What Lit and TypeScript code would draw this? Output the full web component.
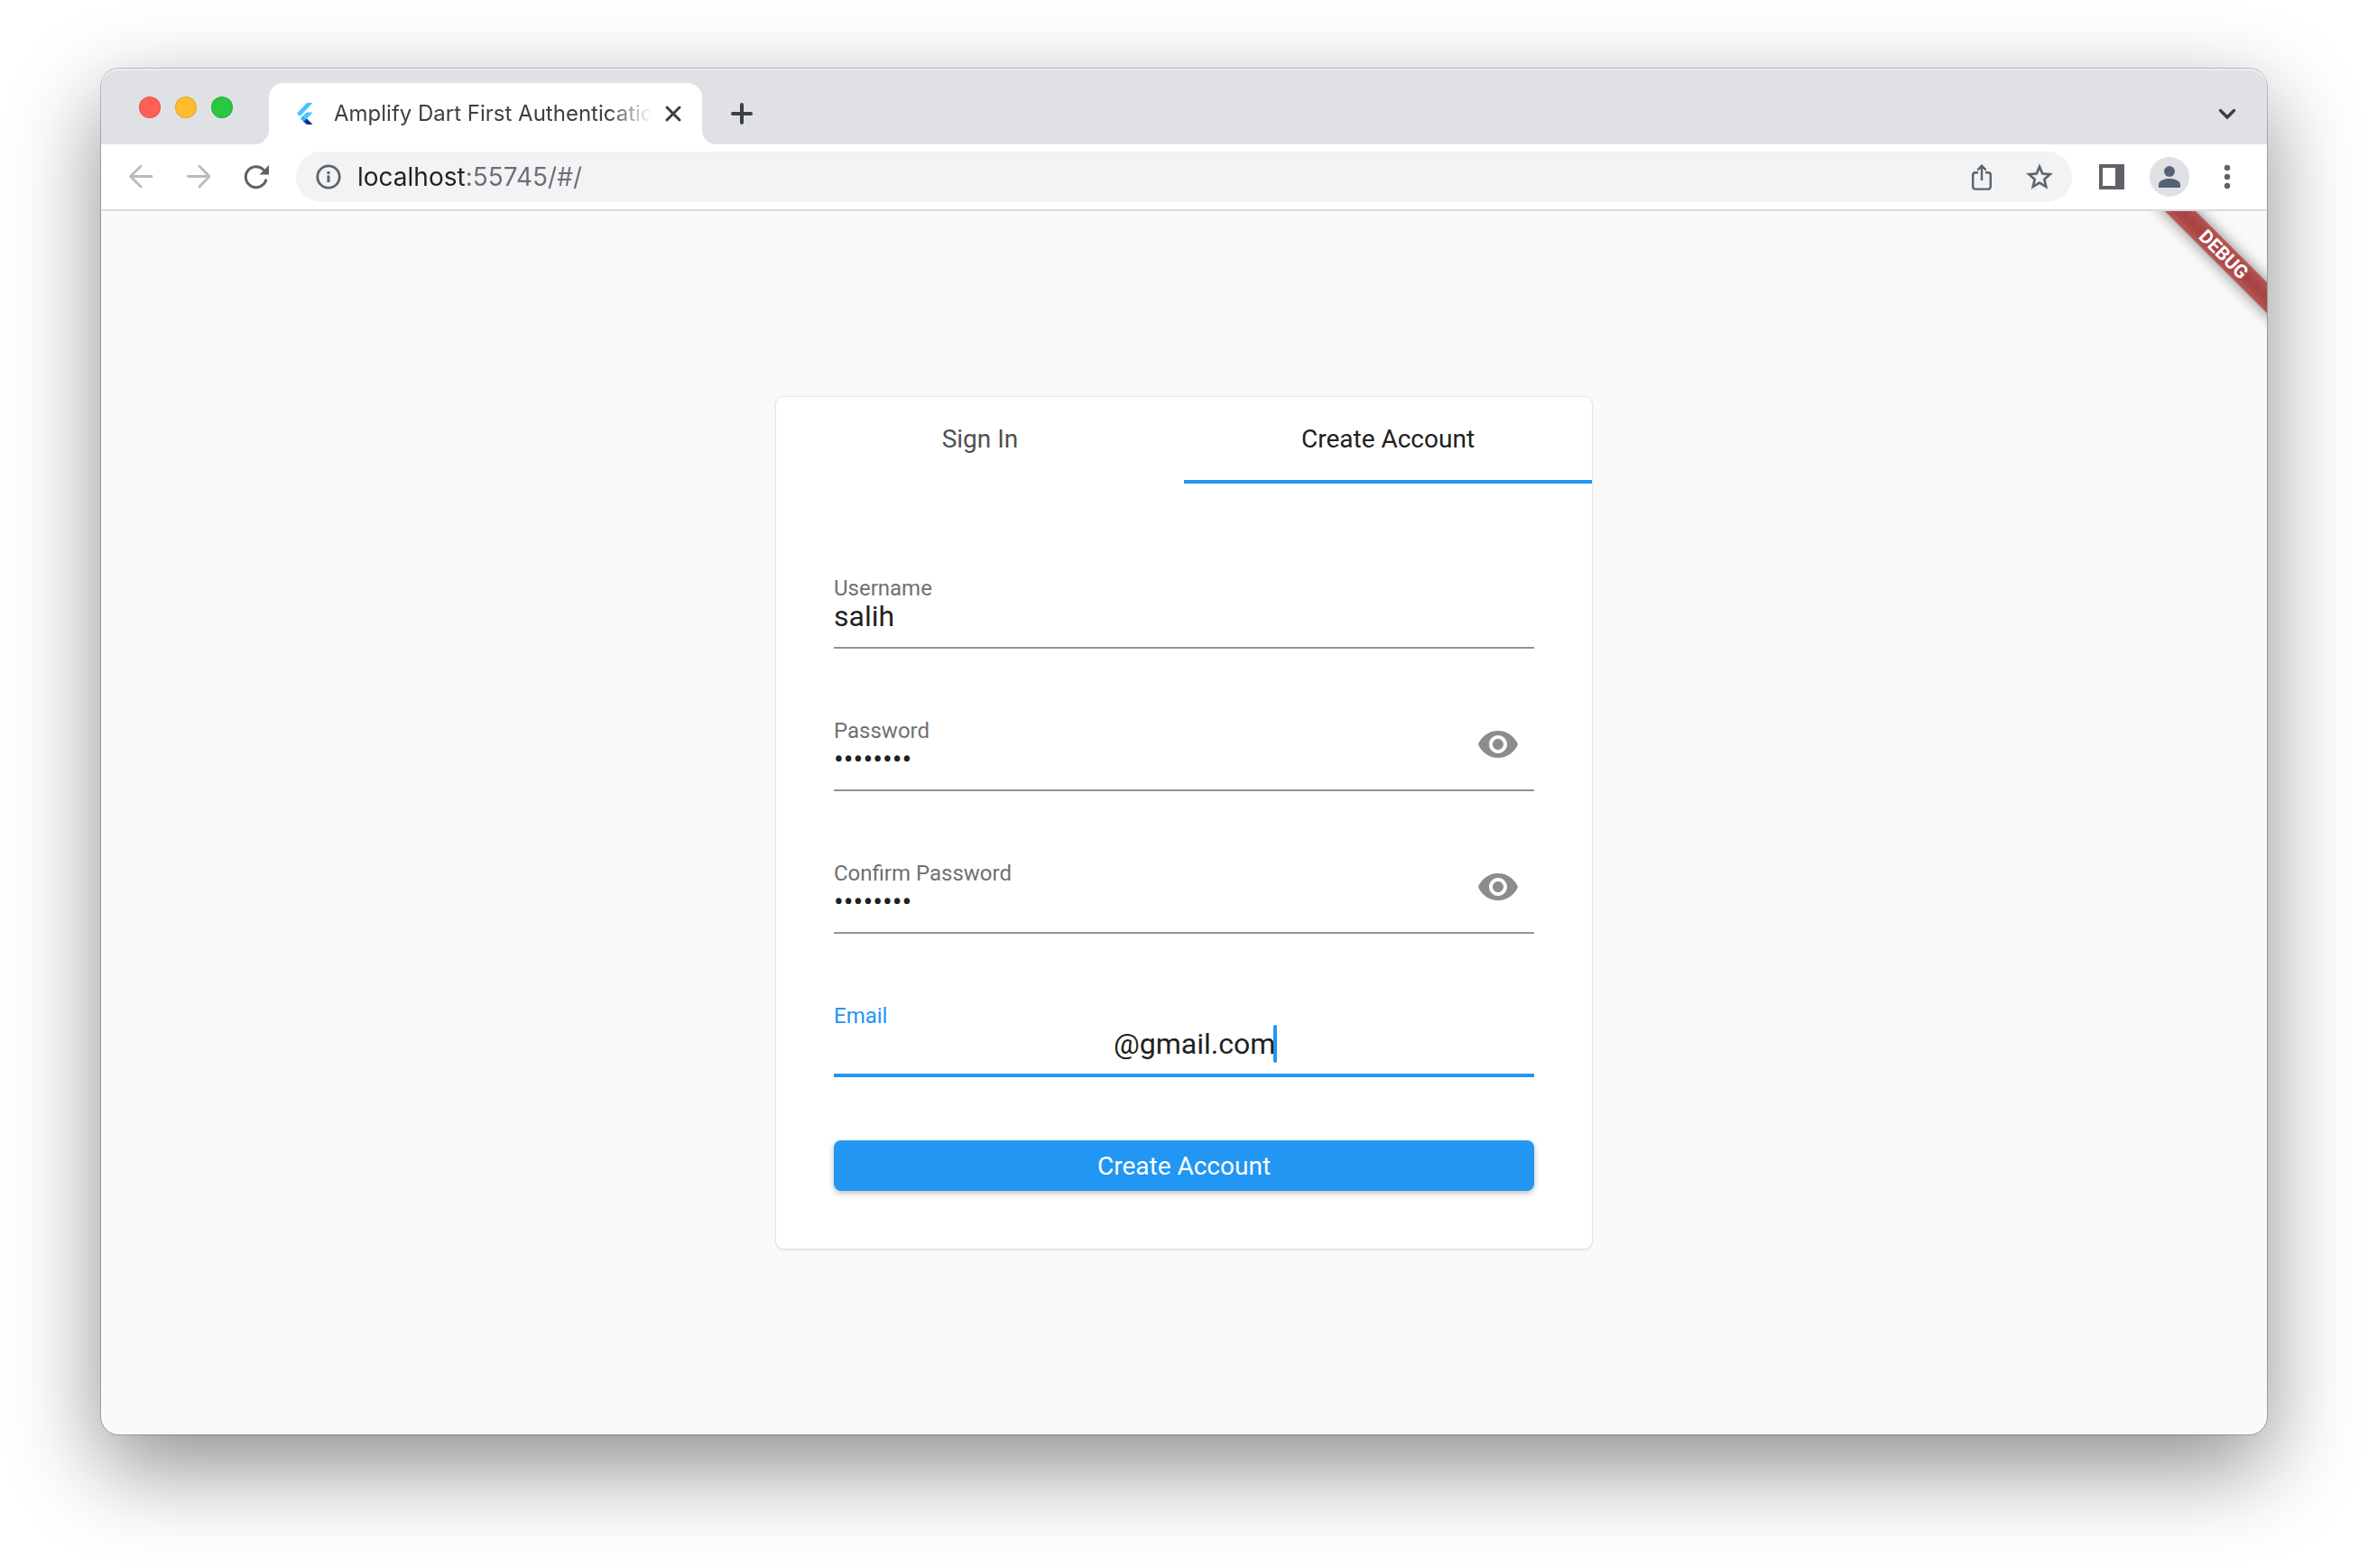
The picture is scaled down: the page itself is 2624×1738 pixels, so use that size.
import { LitElement, html, css, svg, nothing } from "lit";
import { customElement, property, state } from "lit/decorators.js";
import { classMap } from "lit/directives/class-map.js";

const icons = {
  close: svg`<path d="M9 9l14 14M23 9L9 23" fill="none" stroke="#3c4043" stroke-width="3" stroke-linecap="round"/>`,
  plus: svg`<path d="M16 6v20M6 16h20" fill="none" stroke="#3c4043" stroke-width="4" stroke-linecap="round"/>`,
  chevron: svg`<path d="M8.5 12.5l7.5 7.5 7.5-7.5" fill="none" stroke="#3c4043" stroke-width="3.4" stroke-linecap="round"/>`,
  back: svg`<path d="M28 15.500H5M16 4.2L4.500 15.500 16 27" fill="none" stroke="#b8babc" stroke-width="2.8" stroke-linecap="round" stroke-linejoin="round"/>`,
  forward: svg`<path d="M4.500 15.500H27M17 4.2L28 15.500 17 27" fill="none" stroke="#b8babc" stroke-width="2.8" stroke-linecap="round" stroke-linejoin="round"/>`,
  reload: svg`<path d="M24.1 8.2A11.500 11.500 0 1 0 26.7 19.8" fill="none" stroke="#5f6368" stroke-width="3" stroke-linecap="round"/><path d="M30 3v10.500H19.500z" fill="#5f6368"/>`,
  info: svg`<circle cx="16" cy="16" r="12.2" fill="none" stroke="#5f6368" stroke-width="2.8"/><path d="M14.500 14.500h3V22h-3zM14.500 10h3v3h-3z" fill="#5f6368"/>`,
  share: svg`<path d="M12 11.2H9A2.8 2.8 0 0 0 6.2 14v12.8A2.8 2.8 0 0 0 9 29.6h14a2.8 2.8 0 0 0 2.8-2.8V14a2.8 2.8 0 0 0-2.8-2.8h-3M16 20V4M11.3 8.500L16 3.8l4.7 4.7" fill="none" stroke="#5f6368" stroke-width="2.4"/>`,
  star: svg`<path transform="translate(-1.4 -1.1) scale(1.45)" fill="#5f6368" stroke="#5f6368" stroke-width=".25" d="M22 9.240l-7.190-.62L12 2 9.190 8.630 2 9.240l5.460 4.730L5.820 21 12 17.270 18.180 21l-1.630-7.030L22 9.240zM12 15.400l-3.760 2.270 1-4.280-3.320-2.880 4.380-.38L12 6.100l1.710 4.040 4.380.38-3.320 2.880 1 4.280L12 15.400z"/>`,
  panel: svg`<path fill="#5f6368" fill-rule="evenodd" d="M2 2h28v28H2zM6 6v20h14V6z"/>`,
  person: svg`<circle cx="16" cy="10" r="6" fill="#566178"/><path d="M4 28v-3.500c0-4 6-6.500 12-6.500s12 2.500 12 6.500V28z" fill="#566178"/>`,
  menu: svg`<g fill="#5f6368"><circle cx="16" cy="6" r="3.2"/><circle cx="16" cy="16" r="3.2"/><circle cx="16" cy="26" r="3.2"/></g>`,
};

const icon = (name: keyof typeof icons) =>
  html`<svg class="icon" viewBox="0 0 32 32" aria-hidden="true">${icons[name]}</svg>`;

@customElement("form-field")
class FormField extends LitElement {
  @property() label = "";
  @property() value = "";
  @property() type = "text";
  @property({ type: Boolean }) active = false;
  @state() private revealed = false;

  static styles = css`
    :host {
      display: block;
    }
    .field {
      display: flex;
      align-items: flex-start;
      border-bottom: 2px solid #949494;
      padding-bottom: 18px;
    }
    .field.active {
      border-bottom: 4px solid #2196f3;
      padding-bottom: 17px;
    }
    .body {
      flex: 1;
      min-width: 0;
      display: flex;
      flex-direction: column;
    }
    label {
      font-size: 24px;
      line-height: 30px;
      color: #707070;
    }
    .active label {
      color: #2196f3;
    }
    .entry {
      display: flex;
      height: 32px;
      align-items: center;
    }
    input {
      flex: 1;
      min-width: 0;
      height: 38px;
      margin: 0;
      padding: 0;
      border: 0;
      outline: 0;
      background: none;
      font: 32px/38px Roboto, sans-serif;
      color: #212121;
    }
    /* The local part of the address is blanked out, the domain stays. */
    .active input {
      flex: none;
      width: 488px;
      padding-left: 310px;
      box-sizing: border-box;
    }
    .caret {
      width: 4px;
      height: 42px;
      margin-left: -1px;
      border-radius: 2px;
      background: #2196f3;
    }
    .reveal {
      width: 80px;
      height: 60px;
      padding: 0;
      border: 0;
      background: none;
      display: flex;
      align-items: center;
      justify-content: center;
      cursor: pointer;
    }
    .eye {
      width: 48px;
      height: 48px;
      fill: #8c8c8c;
    }
  `;

  render() {
    const secret = this.type === "password";
    return html`
      <div class=${classMap({ field: true, active: this.active })}>
        <div class="body">
          <label for="entry">${this.label}</label>
          <div class="entry">
            <input
              id="entry"
              type=${secret && this.revealed ? "text" : this.type}
              .value=${this.value}
            />
            ${this.active ? html`<span class="caret"></span>` : nothing}
          </div>
        </div>
        ${secret
          ? html`<button
              class="reveal"
              type="button"
              aria-label="Show ${this.label}"
              @click=${() => (this.revealed = !this.revealed)}
            >
              <svg class="eye" viewBox="0 0 24 24" aria-hidden="true">
                <path
                  d="M12 4.500C7 4.500 2.730 7.610 1 12c1.730 4.390 6 7.500 11 7.500s9.270-3.110 11-7.500c-1.730-4.390-6-7.500-11-7.500zM12 17c-2.760 0-5-2.240-5-5s2.240-5 5-5 5 2.240 5 5-2.240 5-5 5zm0-8c-1.660 0-3 1.340-3 3s1.340 3 3 3 3-1.340 3-3-1.340-3-3-3z"
                />
              </svg>
            </button>`
          : nothing}
      </div>
    `;
  }
}

@customElement("auth-card")
class AuthCard extends LitElement {
  static styles = css`
    :host {
      display: block;
      width: min(904px, 100%);
      background: #fff;
      border-radius: 8px;
      box-shadow: 0 2px 2px rgba(0, 0, 0, 0.05), 0 0 3px rgba(0, 0, 0, 0.2);
      font-family: Roboto, sans-serif;
    }
    .tabs {
      display: grid;
      grid-template-columns: 1fr 1fr;
    }
    .tab {
      height: 96px;
      padding: 2px 0 0;
      border: 0;
      border-bottom: 4px solid transparent;
      background: none;
      font: 28px/32px Roboto, sans-serif;
      color: #505050;
      cursor: pointer;
    }
    .tab.selected {
      color: #212121;
      border-bottom-color: #2196f3;
    }
    .form {
      padding: 101px 64px 64px;
      display: flex;
      flex-direction: column;
      gap: 70px;
    }
    .fields {
      display: flex;
      flex-direction: column;
      gap: 76px;
    }
    .submit {
      height: 56px;
      padding: 2px 0 0;
      border: 0;
      border-radius: 8px;
      background: #2196f3;
      color: #fff;
      font: 28px/32px Roboto, sans-serif;
      box-shadow: 0 2px 6px rgba(0, 0, 0, 0.22), 0 4px 8px rgba(0, 0, 0, 0.06);
      cursor: pointer;
    }
  `;

  render() {
    return html`
      <div class="tabs" role="tablist">
        <button class="tab" role="tab" aria-selected="false">Sign In</button>
        <button class="tab selected" role="tab" aria-selected="true">Create Account</button>
      </div>
      <form class="form" @submit=${(e: Event) => e.preventDefault()}>
        <div class="fields">
          <form-field label="Username" value="salih"></form-field>
          <form-field label="Password" type="password" value="password"></form-field>
          <form-field label="Confirm Password" type="password" value="password"></form-field>
          <form-field label="Email" value="@gmail.com" active></form-field>
        </div>
        <button class="submit" type="submit">Create Account</button>
      </form>
    `;
  }
}

@customElement("app-root")
class AppRoot extends LitElement {
  static styles = css`
    :host {
      display: flex;
      box-sizing: border-box;
      min-height: 100vh;
      padding: 76px 112px 148px;
      background: #fff;
      font-family: Inter, sans-serif;
    }
    .window {
      flex: 1;
      min-width: 0;
      display: flex;
      flex-direction: column;
      border-radius: 20px;
      background: #fafafa;
      box-shadow: 0 0 0 1px rgba(0, 0, 0, 0.22), 0 36px 100px rgba(0, 0, 0, 0.45);
    }
    button {
      padding: 0;
      border: 0;
      background: none;
      cursor: pointer;
    }
    .icon {
      display: block;
      width: 32px;
      height: 32px;
    }
    .tool {
      width: 64px;
      height: 56px;
      flex: none;
      display: flex;
      align-items: center;
      justify-content: center;
    }
    .strip {
      height: 84px;
      display: flex;
      align-items: flex-end;
      padding: 0 12px 0 42px;
      border-radius: 20px 20px 0 0;
      background: #dfe1e5;
      box-shadow: inset 0 2px 1px rgba(255, 255, 255, 0.4);
    }
    .strip .tool {
      height: 68px;
    }
    .strip .tool.list {
      margin-left: auto;
    }
    .tool.add {
      margin-left: 12px;
    }
    .lights {
      display: flex;
      gap: 16px;
      align-self: center;
      padding-top: 2px;
      margin-right: 40px;
    }
    .light {
      width: 24px;
      height: 24px;
      border-radius: 50%;
      box-shadow: inset 0 0 0 1px rgba(0, 0, 0, 0.12);
    }
    .light.red {
      background: #ff5f57;
    }
    .light.yellow {
      background: #febc2e;
    }
    .light.green {
      background: #28c840;
    }
    .tab {
      position: relative;
      flex: 0 1 480px;
      min-width: 0;
      box-sizing: border-box;
      height: 68px;
      padding: 0 16px 0 24px;
      display: flex;
      align-items: center;
      border-radius: 16px 16px 0 0;
      background: #fff;
    }
    .tab::before,
    .tab::after {
      content: "";
      position: absolute;
      bottom: 0;
      width: 16px;
      height: 16px;
    }
    .tab::before {
      right: 100%;
      background: radial-gradient(circle at 0 0, transparent 16px, #fff 16px);
    }
    .tab::after {
      left: 100%;
      background: radial-gradient(circle at 100% 0, transparent 16px, #fff 16px);
    }
    .favicon {
      flex: none;
      width: 32px;
      height: 32px;
      margin-right: 16px;
    }
    .title {
      flex: 1;
      min-width: 0;
      overflow: hidden;
      white-space: nowrap;
      font-size: 24px;
      line-height: 32px;
      color: #3c4043;
      -webkit-mask-image: linear-gradient(to left, transparent, #000 48px);
      mask-image: linear-gradient(to left, transparent, #000 48px);
    }
    .close {
      flex: none;
      margin-left: 8px;
    }
    .toolbar {
      display: flex;
      align-items: center;
      padding: 8px 12px;
      background: #fff;
      border-bottom: 2px solid #dadbdc;
    }
    .omnibox {
      flex: 1;
      min-width: 0;
      height: 56px;
      margin: 0 12px;
      padding: 0 4px 0 20px;
      box-sizing: border-box;
      display: flex;
      align-items: center;
      border-radius: 28px;
      background: #f1f3f4;
    }
    .site {
      flex: none;
      margin-right: 16px;
    }
    .address {
      flex: 1;
      min-width: 0;
      padding: 0;
      border: 0;
      outline: 0;
      font: 28px/40px Inter, sans-serif;
      /* Host name in near-black, port and path in grey. */
      color: transparent;
      background: linear-gradient(to right, #202124 120px, #6b6e72 120px);
      -webkit-background-clip: text;
      background-clip: text;
    }
    .avatar {
      width: 44px;
      height: 44px;
      display: flex;
      align-items: center;
      justify-content: center;
      border-radius: 50%;
      background: #dfe1e5;
    }
    .page {
      position: relative;
      flex: 1;
      display: flex;
      align-items: center;
      justify-content: center;
      padding: 64px;
      overflow: hidden;
      border-radius: 0 0 20px 20px;
    }
    .banner {
      position: absolute;
      top: 36px;
      right: -48px;
      width: 192px;
      height: 24px;
      transform: rotate(45deg);
      font: 700 21px/24px Roboto, sans-serif;
      text-align: center;
      color: #fff;
    }
    .banner::before,
    .banner::after {
      content: "";
      position: absolute;
      inset: 0;
      z-index: -1;
    }
    .banner::before {
      background: rgba(0, 0, 0, 0.5);
      filter: blur(8px);
    }
    .banner::after {
      background: rgba(183, 28, 28, 0.63);
    }
  `;

  render() {
    return html`
      <div class="window">
        <header class="strip">
          <div class="lights">
            <button class="light red" aria-label="Close window"></button>
            <button class="light yellow" aria-label="Minimize window"></button>
            <button class="light green" aria-label="Zoom window"></button>
          </div>
          <div class="tab">
            <svg class="favicon" viewBox="0 0 32 32" aria-hidden="true">
              <path d="M18 4h6.500L10.500 19 7 15.500z" fill="#47c5fb" />
              <path d="M18 14.500h6.500L18 21.500l-4-3.500z" fill="#40c4ff" />
              <path d="M14 18l4 4-3.500 3.500L11 21.500z" fill="#29b6f6" />
              <path d="M14.500 25l3.500-3.500 6.500 6.500H18z" fill="#00388a" />
            </svg>
            <span class="title">Amplify Dart First Authentication</span>
            <button class="close" aria-label="Close tab">${icon("close")}</button>
          </div>
          <button class="tool add" aria-label="New tab">${icon("plus")}</button>
          <button class="tool list" aria-label="Search tabs">${icon("chevron")}</button>
        </header>
        <nav class="toolbar">
          <button class="tool" aria-label="Back">${icon("back")}</button>
          <button class="tool" aria-label="Forward">${icon("forward")}</button>
          <button class="tool" aria-label="Reload">${icon("reload")}</button>
          <div class="omnibox">
            <button class="site" aria-label="Site information">${icon("info")}</button>
            <input class="address" aria-label="Address" .value=${"localhost:55745/#/"} />
            <button class="tool" aria-label="Share">${icon("share")}</button>
            <button class="tool" aria-label="Bookmark">${icon("star")}</button>
          </div>
          <button class="tool" aria-label="Side panel">${icon("panel")}</button>
          <button class="tool" aria-label="Profile">
            <span class="avatar">${icon("person")}</span>
          </button>
          <button class="tool" aria-label="Menu">${icon("menu")}</button>
        </nav>
        <main class="page">
          <auth-card></auth-card>
          <div class="banner">DEBUG</div>
        </main>
      </div>
    `;
  }
}
